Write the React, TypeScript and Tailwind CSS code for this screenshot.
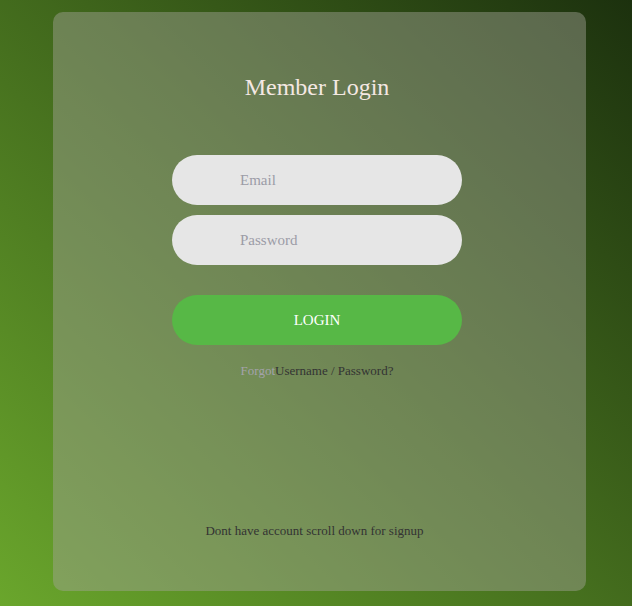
export default function App() {
  return (
    <div
      className="h-[606px] w-full overflow-hidden bg-[linear-gradient(to_top_right,#6aa62c,#1c310e)] pl-[53px] pt-[12px]"
      style={{ fontFamily: '"Liberation Serif", serif' }}
    >
      <div className="flex h-[579px] w-[533px] flex-col items-center rounded-[10px] bg-[rgba(164,165,153,0.45)] pl-[119px] pr-[124px] pt-[61px] pb-[50px]">
        <h1 className="text-[24px] leading-[28px] text-[#f4e8e3]">Member Login</h1>

        <form className="mt-[54px] flex w-[290px] flex-col" onSubmit={(e) => e.preventDefault()}>
          <input
            type="text"
            placeholder="Email"
            className="h-[50px] w-full rounded-full bg-[#e6e6e6] pl-[68px] pr-[30px] text-[15px] text-[#666] outline-none placeholder:text-[#9c9ca6]"
          />
          <input
            type="password"
            placeholder="Password"
            className="mt-[10px] h-[50px] w-full rounded-full bg-[#e6e6e6] pl-[68px] pr-[30px] text-[15px] text-[#666] outline-none placeholder:text-[#9c9ca6]"
          />
          <button
            type="submit"
            className="mt-[30px] h-[50px] w-full rounded-full bg-[#57b846] text-[15px] uppercase text-white"
          >
            Login
          </button>
        </form>

        <p className="mt-[16px] text-[13px] leading-[20px] text-[#333]">
          <span className="text-[#a3a3ab]">Forgot</span>
          Username / Password?
        </p>

        <p className="mt-auto mr-[5px] text-[13px] leading-[20px] text-[#333]">
          Dont have account scroll down for signup
        </p>
      </div>
    </div>
  );
}
